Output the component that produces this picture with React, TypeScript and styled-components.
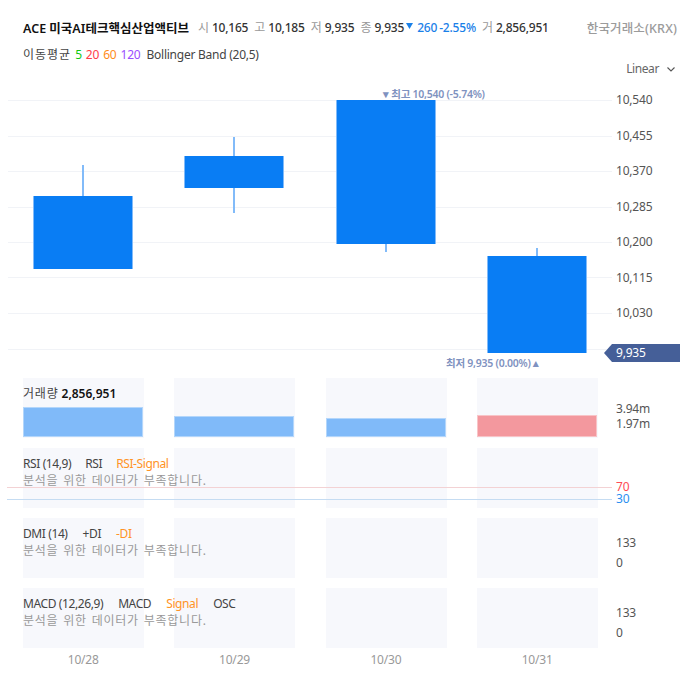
import React from "react";
import styled, { createGlobalStyle } from "styled-components";

const Global = createGlobalStyle`
  html, body { margin: 0; padding: 0; background: #fff; }
  body { font-family: "Noto Sans", "Noto Sans CJK KR", sans-serif; }
`;

const Page = styled.div`
  width: 680px;
  height: 697px;
  overflow: hidden;
  position: relative;
  background: #fff;
  color: #444;
  font-size: 12px;
  letter-spacing: -0.2px;
`;

const Header = styled.header`
  display: flex;
  align-items: center;
  justify-content: space-between;
  height: 20px;
  padding: 17px 3px 0 23px;
  white-space: nowrap;
`;

const Quote = styled.div`
  display: flex;
  align-items: center;
`;

const Title = styled.strong`
  font-size: 12.5px;
  font-weight: 600;
  letter-spacing: 0;
  color: #111;
  margin-right: 9px;
`;

const QLabel = styled.span`
  color: #999;
  width: 11px;
  margin-right: 3px;
  letter-spacing: 0;
`;

const QValue = styled.span<{ $color?: string; $mr?: number }>`
  color: ${(p) => p.$color ?? "#333"};
  font-weight: 500;
  margin-right: ${(p) => p.$mr ?? 6}px;
`;

const Arrow = styled.svg`
  display: block;
  margin-right: 4px;
  margin-top: -2px;
`;

const Exchange = styled.span`
  color: #9b9b9b;
  font-size: 12.5px;
  font-weight: 500;
  letter-spacing: 0.15px;
`;

const ToolRow = styled.div`
  display: flex;
  justify-content: space-between;
  align-items: flex-start;
  height: 45px;
  margin-top: 8px;
  padding: 0 5px 0 23px;
`;

const Legend = styled.div`
  display: flex;
  gap: 4px;
  line-height: 20px;
`;

const Wide = styled.span`
  letter-spacing: 1px;
`;

const LegendName = styled.span`
  margin-left: 2px;
  letter-spacing: -0.25px;
`;

const Tone = styled.span<{ $color: string }>`
  color: ${(p) => p.$color};
`;

const Scale = styled.div`
  display: flex;
  align-items: center;
  gap: 8px;
  margin-top: 15px;
  line-height: 18px;
  letter-spacing: -0.4px;
  color: #666;
`;

const Row = styled.div<{ $h: number; $mt?: number }>`
  display: grid;
  grid-template-columns: 612px 68px;
  height: ${(p) => p.$h}px;
  margin-top: ${(p) => p.$mt ?? 0}px;
  position: relative;
`;

const Plot = styled.div`
  position: relative;
  min-width: 0;
`;

const Axis = styled.div<{ $top: number; $lh: number; $gap: number }>`
  display: flex;
  flex-direction: column;
  gap: ${(p) => p.$gap}px;
  padding: ${(p) => p.$top}px 0 0 4px;
  line-height: ${(p) => p.$lh}px;
  color: #555;
`;

const Cells = styled.div`
  display: grid;
  grid-template-columns: repeat(4, 121px);
  column-gap: 30.33px;
  padding-left: 23px;
  height: 100%;
`;

const Cell = styled.div`
  background: #f7f8fc;
  display: flex;
  flex-direction: column;
  justify-content: flex-end;
  padding-bottom: 1px;
  box-sizing: border-box;
`;

const Bar = styled.div<{ $h: number; $up?: boolean }>`
  width: 120px;
  height: ${(p) => p.$h}px;
  box-sizing: border-box;
  background: ${(p) => (p.$up ? "#f3989e" : "#80baf9")};
  border: 1px solid ${(p) => (p.$up ? "#f8c4c7" : "#b3d6fb")};
`;

const PaneLegend = styled.div`
  position: absolute;
  left: 23px;
  top: 7px;
  line-height: 17px;
  white-space: nowrap;
  letter-spacing: -0.4px;
`;

const VolumeLegend = styled(PaneLegend)`
  display: flex;
  gap: 3px;
  letter-spacing: 0;
`;

const VolumeName = styled.span`
  letter-spacing: 0.8px;
`;

const LegendLine = styled.div<{ $gap?: number }>`
  display: flex;
  gap: ${(p) => p.$gap ?? 14}px;
`;

const Note = styled.div`
  color: #999;
  letter-spacing: 0.75px;
  word-spacing: 1px;
`;

const Bold = styled.b`
  font-weight: 600;
  color: #111;
`;

const Mark = styled.div<{ $x: number; $y: number }>`
  position: absolute;
  left: ${(p) => p.$x}px;
  top: ${(p) => p.$y}px;
  font-size: 10.5px;
  font-weight: 600;
  line-height: 12px;
  color: #7f92c0;
  white-space: nowrap;
  letter-spacing: -0.25px;
`;

const PriceTag = styled.div`
  position: absolute;
  right: 0;
  top: 254px;
  width: 76px;
  height: 18px;
  box-sizing: border-box;
  padding-left: 12px;
  line-height: 18px;
  background: #455f98;
  color: #fff;
  clip-path: polygon(0 50%, 8px 0, 100% 0, 100% 100%, 8px 100%);
`;

const RefLine = styled.div<{ $y: number; $color: string }>`
  position: absolute;
  left: 7px;
  right: 0;
  top: ${(p) => p.$y}px;
  height: 1px;
  background: ${(p) => p.$color};
`;

const Dates = styled.div`
  display: grid;
  grid-template-columns: repeat(4, 121px);
  column-gap: 30.33px;
  padding-left: 22.7px;
  margin-top: 3px;
  line-height: 18px;
  color: #999;
  text-align: center;
`;

const MainSvg = styled.svg`
  display: block;
`;

const grid = [100, 136, 171, 207, 242, 277, 313, 349];
const candles = [
  { x: 33, top: 196, bottom: 269, hi: 165, lo: 269 },
  { x: 184, top: 156, bottom: 188, hi: 137, lo: 213 },
  { x: 336, top: 100, bottom: 244, hi: 100, lo: 252 },
  { x: 487, top: 256, bottom: 353, hi: 248, lo: 353 },
];
const prices = ["10,540", "10,455", "10,370", "10,285", "10,200", "10,115", "10,030"];
const BLUE = "#097df4";
const EDGE = "#82bbf9";
const ORANGE = "#ff9326";

const NoData = () => <Note>분석을 위한 데이터가 부족합니다.</Note>;

const Backdrop = ({ bars }: { bars?: { h: number; up?: boolean }[] }) => (
  <Cells>
    {[0, 1, 2, 3].map((i) => (
      <Cell key={i}>{bars && <Bar $h={bars[i].h} $up={bars[i].up} />}</Cell>
    ))}
  </Cells>
);

export default function App() {
  return (
    <Page>
      <Global />
      <Header>
        <Quote>
          <Title>ACE 미국AI테크핵심산업액티브</Title>
          <QLabel>시</QLabel><QValue>10,165</QValue>
          <QLabel>고</QLabel><QValue>10,185</QValue>
          <QLabel>저</QLabel><QValue>9,935</QValue>
          <QLabel>종</QLabel><QValue $mr={2}>9,935</QValue>
          <Arrow width="7" height="6" viewBox="0 0 7 6"><path d="M0 0 H7 L3.5 6 Z" fill="#1a80e8" /></Arrow>
          <QValue $color="#1a80e8" $mr={2}>260</QValue>
          <QValue $color="#1a80e8">-2.55%</QValue>
          <QLabel>거</QLabel><QValue>2,856,951</QValue>
        </Quote>
        <Exchange>한국거래소(KRX)</Exchange>
      </Header>
      <ToolRow>
        <Legend>
          <Wide>이동평균</Wide>
          <Tone $color="#12c912">5</Tone>
          <Tone $color="#ff3b4a">20</Tone>
          <Tone $color="#ff8c1a">60</Tone>
          <Tone $color="#9a4dff">120</Tone>
          <LegendName>Bollinger Band (20,5)</LegendName>
        </Legend>
        <Scale>
          Linear
          <svg width="8" height="5" viewBox="0 0 8 5" fill="none" stroke="#555" strokeWidth="1.1">
            <path d="M0.5 0.5 L4 4 L7.5 0.5" />
          </svg>
        </Scale>
      </ToolRow>

      <Row $h={280}>
        <Plot>
          <MainSvg width="612" height="280" viewBox="0 90 612 280">
            {grid.map((y) => (
              <line key={y} x1="8" x2="612" y1={y + 0.5} y2={y + 0.5} stroke="#f1f3f7" />
            ))}
            {candles.map((c) => (
              <g key={c.x}>
                <rect x={c.x + 49} y={c.hi} width="2" height={c.lo - c.hi} fill={EDGE} />
                <rect x={c.x} y={c.top} width="100" height={c.bottom - c.top} fill={EDGE} />
                <rect x={c.x + 1} y={c.top} width="98" height={c.bottom - c.top} fill={BLUE} />
              </g>
            ))}
          </MainSvg>
          <Mark $x={383} $y={-2}>▾ 최고 10,540 (-5.74%)</Mark>
          <Mark $x={446} $y={267}>최저 9,935 (0.00%) ▴</Mark>
        </Plot>
        <Axis $top={2} $lh={16} $gap={19.5}>
          {prices.map((p) => <span key={p}>{p}</span>)}
        </Axis>
        <PriceTag>9,935</PriceTag>
      </Row>

      <Row $h={60} $mt={8}>
        <Plot>
          <Backdrop bars={[{ h: 30 }, { h: 21 }, { h: 19 }, { h: 22, up: true }]} />
          <VolumeLegend><VolumeName>거래량</VolumeName><Bold>2,856,951</Bold></VolumeLegend>
        </Plot>
        <Axis $top={23} $lh={15} $gap={0}>
          <span>3.94m</span>
          <span>1.97m</span>
        </Axis>
      </Row>

      <Row $h={60} $mt={10}>
        <Plot>
          <Backdrop />
          <PaneLegend>
            <LegendLine>
              <span>RSI (14,9)</span><span>RSI</span><Tone $color={ORANGE}>RSI-Signal</Tone>
            </LegendLine>
            <NoData />
          </PaneLegend>
          <RefLine $y={39} $color="#f3d2d4" />
          <RefLine $y={51} $color="#c5dcf2" />
        </Plot>
        <Axis $top={33} $lh={12} $gap={0}>
          <Tone $color="#ff4b55">70</Tone>
          <Tone $color="#2b8ff0">30</Tone>
        </Axis>
      </Row>

      <Row $h={60} $mt={10}>
        <Plot>
          <Backdrop />
          <PaneLegend>
            <LegendLine $gap={15}>
              <span>DMI (14)</span><span>+DI</span><Tone $color={ORANGE}>-DI</Tone>
            </LegendLine>
            <NoData />
          </PaneLegend>
        </Plot>
        <Axis $top={18} $lh={14} $gap={6}>
          <span>133</span>
          <span>0</span>
        </Axis>
      </Row>

      <Row $h={60} $mt={10}>
        <Plot>
          <Backdrop />
          <PaneLegend>
            <LegendLine $gap={15}>
              <span>MACD (12,26,9)</span><span>MACD</span><Tone $color={ORANGE}>Signal</Tone><span>OSC</span>
            </LegendLine>
            <NoData />
          </PaneLegend>
        </Plot>
        <Axis $top={18} $lh={14} $gap={6}>
          <span>133</span>
          <span>0</span>
        </Axis>
      </Row>

      <Dates>
        <span>10/28</span>
        <span>10/29</span>
        <span>10/30</span>
        <span>10/31</span>
      </Dates>
    </Page>
  );
}
